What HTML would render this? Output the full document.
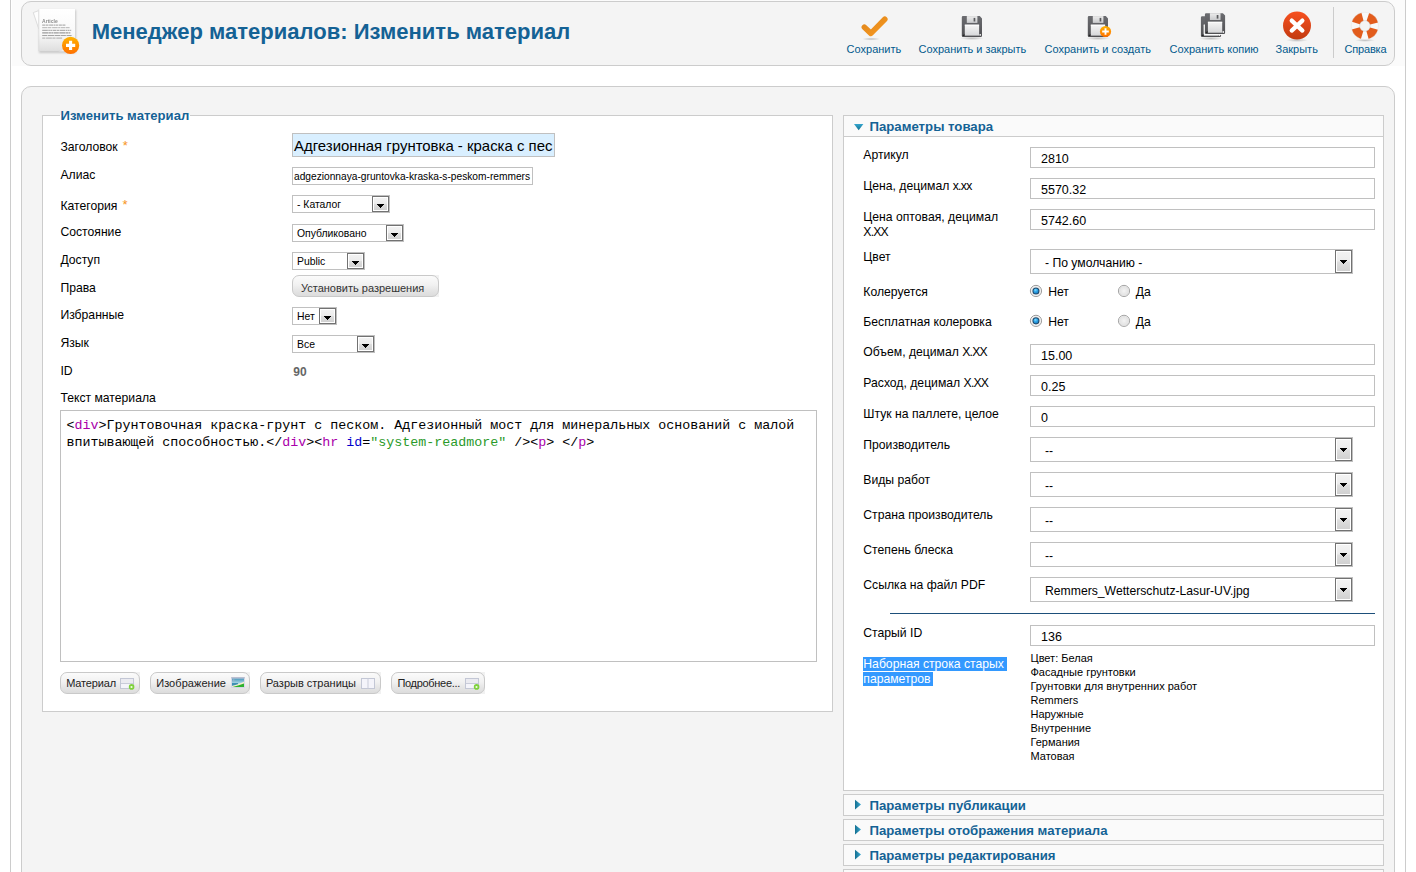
<!DOCTYPE html>
<html lang="ru"><head><meta charset="utf-8"><title>Менеджер материалов: Изменить материал</title>
<style>
html,body{margin:0;padding:0;background:#fff;}
html{overflow:hidden;}
body{width:1416px;height:872px;overflow:hidden;position:relative;font-family:"Liberation Sans",sans-serif;}
.t{position:absolute;white-space:nowrap;margin:0;padding:0;font-family:"Liberation Sans",sans-serif;}
.m{font-family:"Liberation Mono",monospace;}
.b{position:absolute;box-sizing:border-box;}
.inp{position:absolute;box-sizing:border-box;border:1px solid #c0c0c0;background:#fff;}
.sel{position:absolute;box-sizing:border-box;border:1px solid #c0c0c0;background:#fff;}
.arr{position:absolute;box-sizing:border-box;right:0;top:0;bottom:0;width:17px;border:1px solid #727272;background:linear-gradient(#f3f3f3 0%,#ececec 48%,#dedede 52%,#cfcfcf 100%);box-shadow:inset 0 0 0 1px #fff;}
.arr:after{content:"";position:absolute;left:4px;top:7px;width:7px;height:4px;background:linear-gradient(#000,#000) 0 0/7px 1px no-repeat,linear-gradient(#000,#000) 1px 1px/5px 1px no-repeat,linear-gradient(#000,#000) 2px 2px/3px 1px no-repeat,linear-gradient(#000,#000) 3px 3px/1px 1px no-repeat;}
.big .arr:after{top:9px;}
.btn{position:absolute;box-sizing:border-box;border:1px solid #c9c9c9;border-radius:7px;background:linear-gradient(#fbfbfb 0%,#f1f1f1 45%,#e6e6e6 70%,#dcdcdc 100%);}
.pane{position:absolute;box-sizing:border-box;border:1px solid #ccc;background:#fafafa;}
svg{position:absolute;overflow:visible;}
</style></head><body>
<div class="b" style="left:10px;top:0px;width:1px;height:872px;background:#ccc"></div>
<div class="b" style="left:1405px;top:0px;width:1px;height:872px;background:#ccc"></div>
<div class="b" style="left:12px;top:0px;width:1393px;height:66px;background:#fbfbfb"></div>
<div class="b" style="left:21px;top:1px;width:1374px;height:65px;border:1px solid #ccc;border-radius:10px;background:#f4f4f4"></div>
<div class="b" style="left:21px;top:86px;width:1374px;height:800px;border:1px solid #ccc;border-radius:10px;background:#f4f4f4"></div>
<div class="t" style="left:91.7px;top:17px;font-size:22.04px;line-height:30px;font-weight:bold;color:#146295;">Менеджер материалов: Изменить материал</div>
<div class="t" style="left:846.6px;top:39px;font-size:11px;line-height:20px;color:#025a8d;">Сохранить</div>
<div class="t" style="left:918.5px;top:39px;font-size:11px;line-height:20px;color:#025a8d;">Сохранить и закрыть</div>
<div class="t" style="left:1044.5px;top:39px;font-size:11px;line-height:20px;color:#025a8d;">Сохранить и создать</div>
<div class="t" style="left:1169.5px;top:39px;font-size:11px;line-height:20px;color:#025a8d;">Сохранить копию</div>
<div class="t" style="left:1275.5px;top:39px;font-size:11px;line-height:20px;color:#025a8d;">Закрыть</div>
<div class="t" style="left:1344.6px;top:39px;font-size:11px;line-height:20px;color:#025a8d;letter-spacing:-0.2px;">Справка</div>
<div class="b" style="left:1333px;top:7px;width:1px;height:51px;background:#ccc"></div>
<svg width="1416" height="70" viewBox="0 0 1416 70" style="left:0;top:0">
<defs>
<linearGradient id="gp" x1="0" y1="0" x2="0" y2="1"><stop offset="0" stop-color="#fff"/><stop offset="0.6" stop-color="#f8f8f8"/><stop offset="1" stop-color="#dedede"/></linearGradient>
<linearGradient id="go" x1="0" y1="0" x2="0" y2="1"><stop offset="0" stop-color="#ffb300"/><stop offset="1" stop-color="#ff6f00"/></linearGradient>
<linearGradient id="gc" x1="0" y1="0" x2="1" y2="1"><stop offset="0" stop-color="#e0871c"/><stop offset="1" stop-color="#f7981f"/></linearGradient>
<linearGradient id="gf" x1="0" y1="0" x2="0" y2="1"><stop offset="0" stop-color="#6b6c70"/><stop offset="1" stop-color="#505053"/></linearGradient>
<linearGradient id="gl" x1="0" y1="0" x2="0" y2="1"><stop offset="0" stop-color="#f6f6f6"/><stop offset="1" stop-color="#d6d7d9"/></linearGradient>
<linearGradient id="gs" x1="0" y1="0" x2="0" y2="1"><stop offset="0" stop-color="#ededed"/><stop offset="1" stop-color="#c9cacc"/></linearGradient>
<linearGradient id="gr" x1="0" y1="0" x2="0" y2="1"><stop offset="0" stop-color="#f7501f"/><stop offset="1" stop-color="#c23a10"/></linearGradient>
<radialGradient id="sh"><stop offset="0" stop-color="#000" stop-opacity="0.22"/><stop offset="1" stop-color="#000" stop-opacity="0"/></radialGradient>
<filter id="bl2" x="-10%" y="-50%" width="120%" height="200%"><feGaussianBlur stdDeviation="0.28"/></filter>
<filter id="bl" x="-20%" y="-20%" width="140%" height="140%"><feGaussianBlur stdDeviation="0.8"/></filter>
<g id="floppy">
  <path d="M1.2 0 H18 L20.2 2.4 V19.6 a1.2 1.2 0 0 1 -1.2 1.2 H1.2 a1.2 1.2 0 0 1 -1.2 -1.2 V1.2 A1.2 1.2 0 0 1 1.2 0 Z" fill="url(#gf)"/>
  <rect x="5" y="0" width="10.6" height="6.8" fill="url(#gs)"/>
  <rect x="11.8" y="1.8" width="1.7" height="3.6" fill="#5a5b5e"/>
  <rect x="3" y="8.6" width="14.3" height="10.9" fill="url(#gl)"/>
  <rect x="3" y="8.6" width="14.3" height="0.9" fill="#fff"/>
  <rect x="17.7" y="18" width="1.4" height="1.6" fill="#fff"/>
  <path d="M0.6 19.9 L2.6 17.6 V19.9 Z" fill="#222"/>
</g>
</defs>
<!-- article icon -->
<rect x="39" y="10" width="37" height="43" fill="#000" opacity="0.18" filter="url(#bl)"/>
<path d="M33.3 12.6 L38.8 10.6 V29 Z" fill="#fdfdfd" stroke="#d0d0d0" stroke-width="0.7"/>
<rect x="38.7" y="9" width="36.3" height="42.2" fill="url(#gp)"/>
<path d="M38.9 9 V51" stroke="#d8d8d8" stroke-width="0.6"/>
<text x="42.1" y="23" font-family="Liberation Sans, sans-serif" font-size="4.9" font-weight="bold" fill="#8c8c8c" filter="url(#bl2)" textLength="15.6" lengthAdjust="spacingAndGlyphs">Article</text>
<g stroke="#4a4a4a" stroke-width="1" opacity="0.52" filter="url(#bl2)" fill="none">
<path d="M42.2 25.1 H66" stroke-dasharray="3.2 0.5 2.6 0.6 4.4 0.5 1.2 0.4 2.5 0.6"/>
<path d="M42.2 27.7 H69.6" stroke-dasharray="4.8 0.5 3.9 0.7 5.6 0.5 2 0.5" opacity="0.75"/>
<path d="M42.2 30.3 H71.2" stroke-dasharray="5.6 0.5 1.6 0.4 1.9 0.5 3.7 0.5 2.2 0.5"/>
<path d="M42.2 32.9 H70.8" stroke-dasharray="6.2 0.4 2.1 0.4 2 0.5 5 0.5" stroke-width="1.2"/>
<path d="M42.2 35.5 H71.6" stroke-dasharray="5.2 0.6 6.3 0.5 5.4 0.5" opacity="0.9"/>
<path d="M42.2 38.1 H62.4" stroke-dasharray="3.2 0.7 5.8 0.5" opacity="0.8"/>
</g>
<path d="M58.5 51.2 Q63 50.6 66.2 47.6 L66.8 51.2 Z" fill="#fbfbfb" stroke="#d6d6d6" stroke-width="0.4"/>
<circle cx="70.6" cy="45.4" r="8.6" fill="url(#go)"/>
<path d="M66 45.4 H75.2 M70.6 40.8 V50" stroke="#fff" stroke-width="3.1"/>
<!-- save check -->
<ellipse cx="871.2" cy="39" rx="9" ry="1.6" fill="url(#sh)"/>
<path d="M864.4 27.2 L870.9 33.4 L884.8 19.3" fill="none" stroke="url(#gc)" stroke-width="5.6" stroke-linecap="round" stroke-linejoin="round"/>
<!-- floppies -->
<ellipse cx="972" cy="38.3" rx="12" ry="1.8" fill="url(#sh)"/>
<use href="#floppy" x="961.8" y="16.1"/>
<ellipse cx="1098" cy="38.3" rx="12" ry="1.8" fill="url(#sh)"/>
<use href="#floppy" x="1087.8" y="16.1"/>
<circle cx="1105.5" cy="31.5" r="5.6" fill="url(#go)"/>
<path d="M1102.2 31.5 H1108.8 M1105.5 28.2 V34.8" stroke="#fff" stroke-width="1.9"/>
<ellipse cx="1211" cy="38.5" rx="12" ry="1.8" fill="url(#sh)"/>
<use href="#floppy" x="1200.9" y="16.2"/>
<path d="M1204.2 24.6 V34.6 H1222" fill="none" stroke="#fff" stroke-width="1"/>
<use href="#floppy" x="1204.9" y="13.2"/>
<!-- close -->
<ellipse cx="1297" cy="40.2" rx="11" ry="1.8" fill="url(#sh)"/>
<circle cx="1297" cy="25.6" r="14" fill="url(#gr)"/>
<path d="M1291.7 20.6 L1302.4 30.6 M1302.4 20.6 L1291.7 30.6" stroke="#fff" stroke-width="4.2" stroke-linecap="round"/>
<!-- help -->
<ellipse cx="1365" cy="40.3" rx="10" ry="1.6" fill="url(#sh)"/>
<circle cx="1364.9" cy="25.9" r="9.5" fill="none" stroke="#f8f8f8" stroke-width="8.2"/>
<circle cx="1364.9" cy="25.9" r="9.5" fill="none" stroke="#e25c1c" stroke-width="8.2" stroke-dasharray="9.4 5.52" stroke-dashoffset="-2.76" transform="rotate(0 1364.9 25.9)"/>
<circle cx="1364.9" cy="25.9" r="13.7" fill="none" stroke="#ddd" stroke-width="0.5" opacity="0.7"/>
<circle cx="1364.9" cy="25.9" r="5.3" fill="none" stroke="#b8b8b8" stroke-width="0.6" opacity="0.6"/>
</svg>

<div class="b" style="left:42px;top:115px;width:791px;height:597px;border:1px solid #ccc;background:#fff"></div>
<div class="b" style="left:60px;top:115px;width:130px;height:1px;background:#fff"></div>
<div class="t" style="left:60.5px;top:106px;font-size:13.1px;line-height:20px;font-weight:bold;color:#146295;">Изменить материал</div>
<div class="t" style="left:60.4px;top:137px;font-size:12.2px;line-height:20px;color:#000;">Заголовок<span style="color:#f7941d;font-size:13px;position:relative;left:5px;top:-1px">*</span></div>
<div class="t" style="left:60.4px;top:165px;font-size:12.2px;line-height:20px;color:#000;">Алиас</div>
<div class="t" style="left:60.4px;top:196px;font-size:12.2px;line-height:20px;color:#000;">Категория<span style="color:#f7941d;font-size:13px;position:relative;left:5px;top:-1px">*</span></div>
<div class="t" style="left:60.4px;top:222px;font-size:12.2px;line-height:20px;color:#000;">Состояние</div>
<div class="t" style="left:60.4px;top:250px;font-size:12.2px;line-height:20px;color:#000;">Доступ</div>
<div class="t" style="left:60.4px;top:278px;font-size:12.2px;line-height:20px;color:#000;">Права</div>
<div class="t" style="left:60.4px;top:305px;font-size:12.2px;line-height:20px;color:#000;">Избранные</div>
<div class="t" style="left:60.4px;top:333px;font-size:12.2px;line-height:20px;color:#000;">Язык</div>
<div class="t" style="left:60.4px;top:361px;font-size:12.2px;line-height:20px;color:#000;">ID</div>
<div class="t" style="left:60.4px;top:388px;font-size:12.2px;line-height:20px;color:#000;">Текст материала</div>
<div class="inp" style="left:292px;top:133px;width:263px;height:24px;background:#d9efff;overflow:hidden"></div>
<div class="t" style="left:294px;top:136px;font-size:14.95px;line-height:20px;color:#000;">Адгезионная грунтовка - краска с пес</div>
<div class="inp" style="left:292px;top:167px;width:241px;height:18px"></div>
<div class="t" style="left:294px;top:167px;font-size:10.2px;line-height:20px;color:#000;">adgezionnaya-gruntovka-kraska-s-peskom-remmers</div>
<div class="sel" style="left:292px;top:195px;width:98px;height:18px"><div class="arr"></div></div>
<div class="t" style="left:297px;top:195px;font-size:10.4px;line-height:20px;color:#000;">- Каталог</div>
<div class="sel" style="left:292px;top:224px;width:112px;height:18px"><div class="arr"></div></div>
<div class="t" style="left:297px;top:224px;font-size:10.4px;line-height:20px;color:#000;">Опубликовано</div>
<div class="sel" style="left:292px;top:252px;width:73px;height:18px"><div class="arr"></div></div>
<div class="t" style="left:297px;top:252px;font-size:10.4px;line-height:20px;color:#000;">Public</div>
<div class="sel" style="left:292px;top:307px;width:45px;height:18px"><div class="arr"></div></div>
<div class="t" style="left:297px;top:307px;font-size:10.4px;line-height:20px;color:#000;">Нет</div>
<div class="sel" style="left:292px;top:335px;width:83px;height:18px"><div class="arr"></div></div>
<div class="t" style="left:297px;top:335px;font-size:10.4px;line-height:20px;color:#000;">Все</div>
<div class="b" style="left:431px;top:275px;width:8px;height:22px;background:#f1f1f1"></div>
<div class="btn" style="left:292px;top:275px;width:147px;height:22px"></div>
<div class="t" style="left:301px;top:278px;font-size:11px;line-height:20px;color:#333;">Установить разрешения</div>
<div class="t" style="left:293.3px;top:362px;font-size:12px;line-height:20px;font-weight:bold;color:#666;">90</div>
<div class="inp" style="left:60px;top:410px;width:757px;height:252px"></div>
<div class="t m" style="left:66.4px;top:416px;font-size:13.333px;line-height:20px;color:#000;white-space:pre;">&lt;<span style="color:#a0a">div</span>&gt;Грунтовочная краска-грунт с песком. Адгезионный мост для минеральных оснований с малой</div>
<div class="t m" style="left:66.4px;top:433px;font-size:13.333px;line-height:20px;color:#000;white-space:pre;">впитывающей способностью.&lt;/<span style="color:#a0a">div</span>&gt;&lt;<span style="color:#a0a">hr</span> <span style="color:#00c">id</span>=<span style="color:#2a9a2a">"system-readmore"</span> /&gt;&lt;<span style="color:#a0a">p</span>&gt; &lt;/<span style="color:#a0a">p</span>&gt;</div>
<div class="b" style="left:132px;top:672px;width:8px;height:22px;background:#f1f1f1"></div>
<div class="btn" style="left:60px;top:672px;width:80px;height:22px"></div>
<div class="t" style="left:66.2px;top:673px;font-size:11px;line-height:20px;color:#222;letter-spacing:-0.15px;">Материал</div>
<svg width="16" height="13" viewBox="0 0 16 13" style="left:120px;top:678px"><rect x="0.5" y="0.5" width="13" height="10" fill="#f4f4fa" stroke="#c3c7d5"/><rect x="1" y="1" width="12" height="4" fill="#ebebf1"/><path d="M1 5.5 H13" stroke="#c9ccd9"/><circle cx="11.6" cy="8.9" r="2.8" fill="#7ed13c"/><circle cx="11.5" cy="9" r="1.1" fill="#f2fbe6"/></svg>
<div class="b" style="left:242px;top:672px;width:8px;height:22px;background:#f1f1f1"></div>
<div class="btn" style="left:150px;top:672px;width:100px;height:22px"></div>
<div class="t" style="left:156.2px;top:673px;font-size:11px;line-height:20px;color:#222;letter-spacing:0.05px;">Изображение</div>
<svg width="16" height="13" viewBox="0 0 16 13" style="left:231px;top:677px"><defs><linearGradient id="sky" x1="0" y1="0" x2="0" y2="1"><stop offset="0" stop-color="#4a98bb"/><stop offset="0.55" stop-color="#a9d7e8"/><stop offset="1" stop-color="#cfeaf0"/></linearGradient></defs><rect x="0.2" y="0.2" width="13.6" height="10.8" rx="0.6" fill="#d3d4e6"/><rect x="0.2" y="0.2" width="13.6" height="1.2" fill="#b4b8cb"/><rect x="1" y="1.6" width="12" height="8.4" fill="url(#sky)"/><rect x="1" y="6" width="6" height="2.8" fill="#3f90b3"/><path d="M1 10 V9 L6 7.4 L13 4.8 V10 Z" fill="#f4efcf"/><path d="M1.6 10 L7 8.6 L13 6.4 V10 Z" fill="#2db12f"/><rect x="1.8" y="2.2" width="1.6" height="2.2" fill="#9fb4c8" opacity="0.8"/></svg>
<div class="b" style="left:373px;top:672px;width:8px;height:22px;background:#f1f1f1"></div>
<div class="btn" style="left:260px;top:672px;width:121px;height:22px"></div>
<div class="t" style="left:265.9px;top:673px;font-size:11px;line-height:20px;color:#222;letter-spacing:0px;">Разрыв страницы</div>
<svg width="16" height="13" viewBox="0 0 16 13" style="left:361px;top:678px"><rect x="0.5" y="0.5" width="13" height="10" fill="#f4f4fa" stroke="#c3c7d5"/><path d="M7 0.5 V10.5" stroke="#c9ccd9"/></svg>
<div class="b" style="left:477px;top:672px;width:8px;height:22px;background:#f1f1f1"></div>
<div class="btn" style="left:391px;top:672px;width:94px;height:22px"></div>
<div class="t" style="left:397.4px;top:673px;font-size:11px;line-height:20px;color:#222;letter-spacing:-0.3px;">Подробнее...</div>
<svg width="16" height="13" viewBox="0 0 16 13" style="left:465.3px;top:678px"><rect x="0.5" y="0.5" width="13" height="10" fill="#f4f4fa" stroke="#c3c7d5"/><rect x="1" y="1" width="12" height="4" fill="#ebebf1"/><path d="M1 5.5 H13" stroke="#c9ccd9"/><circle cx="11.6" cy="8.9" r="2.8" fill="#7ed13c"/><circle cx="11.5" cy="9" r="1.1" fill="#f2fbe6"/></svg>
<div class="pane" style="left:843px;top:115px;width:541px;height:676px;background:#fff"></div>
<div class="b" style="left:844px;top:116px;width:539px;height:20px;background:#fafafa"></div>
<div class="b" style="left:844px;top:136px;width:539px;height:1px;background:#ccc"></div>
<div class="t" style="left:869.5px;top:117px;font-size:13.2px;line-height:20px;font-weight:bold;color:#146295;">Параметры товара</div>
<div class="pane" style="left:843px;top:794px;width:541px;height:22px"></div>
<div class="t" style="left:869.5px;top:796px;font-size:13.2px;line-height:20px;font-weight:bold;color:#146295;">Параметры публикации</div>
<div class="pane" style="left:843px;top:819px;width:541px;height:22px"></div>
<div class="t" style="left:869.5px;top:821px;font-size:13.2px;line-height:20px;font-weight:bold;color:#146295;">Параметры отображения материала</div>
<div class="pane" style="left:843px;top:844px;width:541px;height:22px"></div>
<div class="t" style="left:869.5px;top:846px;font-size:13.2px;line-height:20px;font-weight:bold;color:#146295;">Параметры редактирования</div>
<div class="pane" style="left:843px;top:869px;width:541px;height:22px"></div>
<svg width="20" height="760" viewBox="0 0 20 760" style="left:850px;top:115px">
<defs><linearGradient id="ga" x1="0" y1="0" x2="0" y2="1"><stop offset="0" stop-color="#35a6cf"/><stop offset="1" stop-color="#12708f"/></linearGradient>
<linearGradient id="gb" x1="0" y1="0" x2="1" y2="0"><stop offset="0" stop-color="#156f90"/><stop offset="1" stop-color="#3aa9d2"/></linearGradient></defs>
<path d="M4 9 H13.4 L8.7 15.2 Z" fill="url(#ga)"/>
<path d="M5 684.8 L11 689.6 L5 694.4 Z" fill="url(#gb)"/>
<path d="M5 709.8 L11 714.6 L5 719.4 Z" fill="url(#gb)"/>
<path d="M5 734.8 L11 739.6 L5 744.4 Z" fill="url(#gb)"/>
</svg>

<div class="t" style="left:863.3px;top:145px;font-size:12.2px;line-height:20px;color:#000;">Артикул</div>
<div class="t" style="left:863.3px;top:176px;font-size:12.2px;line-height:20px;color:#000;">Цена, децимал <span style="letter-spacing:-0.7px">х.хх</span></div>
<div class="t" style="left:863.3px;top:207px;font-size:12.2px;line-height:20px;color:#000;">Цена оптовая, децимал</div>
<div class="t" style="left:863.3px;top:222px;font-size:12.2px;line-height:20px;color:#000;"><span style="letter-spacing:-0.8px">Х.ХХ</span></div>
<div class="t" style="left:863.3px;top:247px;font-size:12.2px;line-height:20px;color:#000;">Цвет</div>
<div class="t" style="left:863.3px;top:282px;font-size:12.2px;line-height:20px;color:#000;">Колеруется</div>
<div class="t" style="left:863.3px;top:312px;font-size:12.2px;line-height:20px;color:#000;">Бесплатная колеровка</div>
<div class="t" style="left:863.3px;top:342px;font-size:12.2px;line-height:20px;color:#000;">Объем, децимал <span style="letter-spacing:-0.8px">Х.ХХ</span></div>
<div class="t" style="left:863.3px;top:373px;font-size:12.2px;line-height:20px;color:#000;">Расход, децимал <span style="letter-spacing:-0.8px">Х.ХХ</span></div>
<div class="t" style="left:863.3px;top:404px;font-size:12.2px;line-height:20px;color:#000;">Штук на паллете, целое</div>
<div class="t" style="left:863.3px;top:435px;font-size:12.2px;line-height:20px;color:#000;">Производитель</div>
<div class="t" style="left:863.3px;top:470px;font-size:12.2px;line-height:20px;color:#000;">Виды работ</div>
<div class="t" style="left:863.3px;top:505px;font-size:12.2px;line-height:20px;color:#000;">Страна производитель</div>
<div class="t" style="left:863.3px;top:540px;font-size:12.2px;line-height:20px;color:#000;">Степень блеска</div>
<div class="t" style="left:863.3px;top:575px;font-size:12.2px;line-height:20px;color:#000;">Ссылка на файл PDF</div>
<div class="t" style="left:863.3px;top:623px;font-size:12.2px;line-height:20px;color:#000;">Старый ID</div>
<div class="inp" style="left:1030px;top:147px;width:345px;height:21px"></div>
<div class="t" style="left:1041px;top:149px;font-size:12.5px;line-height:20px;color:#000;">2810</div>
<div class="inp" style="left:1030px;top:178px;width:345px;height:21px"></div>
<div class="t" style="left:1041px;top:180px;font-size:12.5px;line-height:20px;color:#000;">5570.32</div>
<div class="inp" style="left:1030px;top:209px;width:345px;height:21px"></div>
<div class="t" style="left:1041px;top:211px;font-size:12.5px;line-height:20px;color:#000;">5742.60</div>
<div class="inp" style="left:1030px;top:344px;width:345px;height:21px"></div>
<div class="t" style="left:1041px;top:346px;font-size:12.5px;line-height:20px;color:#000;">15.00</div>
<div class="inp" style="left:1030px;top:375px;width:345px;height:21px"></div>
<div class="t" style="left:1041px;top:377px;font-size:12.5px;line-height:20px;color:#000;">0.25</div>
<div class="inp" style="left:1030px;top:406px;width:345px;height:21px"></div>
<div class="t" style="left:1041px;top:408px;font-size:12.5px;line-height:20px;color:#000;">0</div>
<div class="inp" style="left:1030px;top:625px;width:345px;height:21px"></div>
<div class="t" style="left:1041px;top:627px;font-size:12.5px;line-height:20px;color:#000;">136</div>
<div class="sel big" style="left:1030px;top:249px;width:323px;height:25px"><div class="arr"></div></div>
<div class="t" style="left:1045px;top:253px;font-size:12.2px;line-height:20px;color:#000;">- По умолчанию -</div>
<div class="sel big" style="left:1030px;top:437px;width:323px;height:25px"><div class="arr"></div></div>
<div class="t" style="left:1045px;top:441px;font-size:12.2px;line-height:20px;color:#000;">--</div>
<div class="sel big" style="left:1030px;top:472px;width:323px;height:25px"><div class="arr"></div></div>
<div class="t" style="left:1045px;top:476px;font-size:12.2px;line-height:20px;color:#000;">--</div>
<div class="sel big" style="left:1030px;top:507px;width:323px;height:25px"><div class="arr"></div></div>
<div class="t" style="left:1045px;top:511px;font-size:12.2px;line-height:20px;color:#000;">--</div>
<div class="sel big" style="left:1030px;top:542px;width:323px;height:25px"><div class="arr"></div></div>
<div class="t" style="left:1045px;top:546px;font-size:12.2px;line-height:20px;color:#000;">--</div>
<div class="sel big" style="left:1030px;top:577px;width:323px;height:25px"><div class="arr"></div></div>
<div class="t" style="left:1045px;top:581px;font-size:12.2px;line-height:20px;color:#000;">Remmers_Wetterschutz-Lasur-UV.jpg</div>
<svg width="110" height="50" viewBox="0 0 110 50" style="left:1025px;top:280px">
<defs>
<radialGradient id="rd" cx="0.42" cy="0.35" r="0.7"><stop offset="0" stop-color="#6fd0f7"/><stop offset="0.45" stop-color="#2a9bdc"/><stop offset="0.8" stop-color="#1b5f8e"/><stop offset="1" stop-color="#17384f"/></radialGradient>
<radialGradient id="rd2" cx="0.4" cy="0.3" r="0.75"><stop offset="0" stop-color="#7fdcff"/><stop offset="0.5" stop-color="#2ea3e6"/><stop offset="1" stop-color="#1c7cc0"/></radialGradient>
<radialGradient id="ru" cx="0.5" cy="0.5" r="0.5"><stop offset="0" stop-color="#f4f4f4"/><stop offset="0.6" stop-color="#e6e6e6"/><stop offset="1" stop-color="#fdfdfd"/></radialGradient>
<g id="ron"><circle r="5.6" fill="#fff" stroke="#989898" stroke-width="1"/><circle r="4.4" fill="none" stroke="#e4e4e4" stroke-width="0.8"/><circle r="3.55" fill="#1d4363"/><circle r="2.55" fill="url(#rd2)"/></g>
<g id="roff"><circle r="5.6" fill="url(#ru)" stroke="#9a9a9a" stroke-width="0.9"/><circle r="4.4" fill="none" stroke="#dcdcdc" stroke-width="0.8"/></g>
</defs>
<use href="#ron" x="10.95" y="10.95"/><use href="#roff" x="99" y="10.95"/>
<use href="#ron" x="10.95" y="40.85"/><use href="#roff" x="99" y="40.85"/>
</svg>

<div class="t" style="left:1048.2px;top:282px;font-size:12.2px;line-height:20px;color:#000;">Нет</div>
<div class="t" style="left:1135.7px;top:282px;font-size:12.2px;line-height:20px;color:#000;">Да</div>
<div class="t" style="left:1048.2px;top:312px;font-size:12.2px;line-height:20px;color:#000;">Нет</div>
<div class="t" style="left:1135.7px;top:312px;font-size:12.2px;line-height:20px;color:#000;">Да</div>
<div class="b" style="left:890px;top:613px;width:485px;height:1px;background:#1d4f7a"></div>
<div class="b" style="left:863px;top:657px;width:144px;height:14px;background:#3399ff"></div>
<div class="b" style="left:863px;top:672px;width:70px;height:14px;background:#3399ff"></div>
<div class="t" style="left:863.3px;top:654px;font-size:12.2px;line-height:20px;color:#fff;">Наборная строка старых</div>
<div class="t" style="left:863.3px;top:669px;font-size:12.2px;line-height:20px;color:#fff;">параметров</div>
<div class="t" style="left:1030.5px;top:648px;font-size:11px;line-height:20px;color:#000;">Цвет: Белая</div>
<div class="t" style="left:1030.5px;top:662px;font-size:11px;line-height:20px;color:#000;">Фасадные грунтовки</div>
<div class="t" style="left:1030.5px;top:676px;font-size:11px;line-height:20px;color:#000;">Грунтовки для внутренних работ</div>
<div class="t" style="left:1030.5px;top:690px;font-size:11px;line-height:20px;color:#000;">Remmers</div>
<div class="t" style="left:1030.5px;top:704px;font-size:11px;line-height:20px;color:#000;">Наружные</div>
<div class="t" style="left:1030.5px;top:718px;font-size:11px;line-height:20px;color:#000;">Внутренние</div>
<div class="t" style="left:1030.5px;top:732px;font-size:11px;line-height:20px;color:#000;">Германия</div>
<div class="t" style="left:1030.5px;top:746px;font-size:11px;line-height:20px;color:#000;">Матовая</div>
</body></html>
